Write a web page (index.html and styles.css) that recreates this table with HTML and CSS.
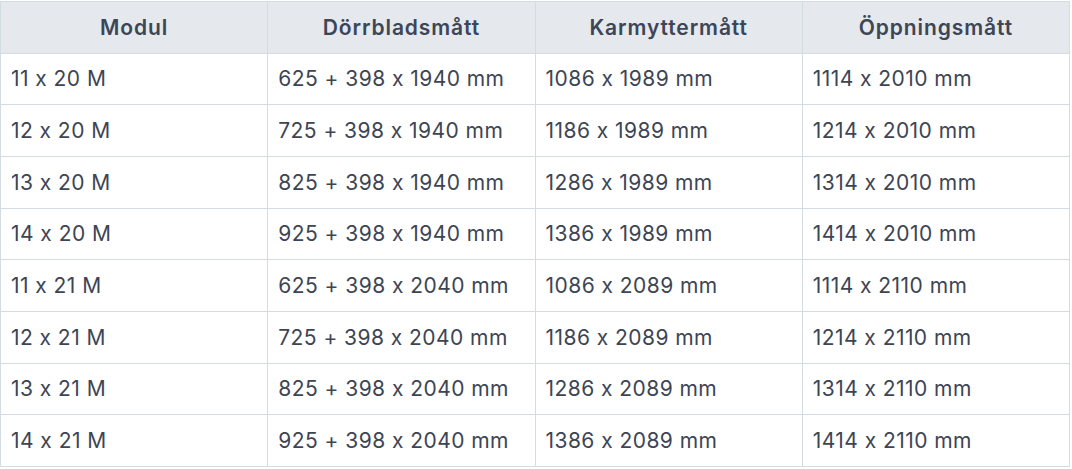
FILE: index.html
```html
<!DOCTYPE html>
<html lang="sv">
<head>
<meta charset="utf-8">
<title>Mått</title>
<link rel="stylesheet" href="styles.css">
</head>
<body>
<table class="dims">
  <thead>
    <tr><th>Modul</th><th>Dörrbladsmått</th><th>Karmyttermått</th><th>Öppningsmått</th></tr>
  </thead>
  <tbody>
    <tr><td>11 x 20 M</td><td>625 + 398 x 1940 mm</td><td>1086 x 1989 mm</td><td>1114 x 2010 mm</td></tr>
    <tr><td>12 x 20 M</td><td>725 + 398 x 1940 mm</td><td>1186 x 1989 mm</td><td>1214 x 2010 mm</td></tr>
    <tr><td>13 x 20 M</td><td>825 + 398 x 1940 mm</td><td>1286 x 1989 mm</td><td>1314 x 2010 mm</td></tr>
    <tr><td>14 x 20 M</td><td>925 + 398 x 1940 mm</td><td>1386 x 1989 mm</td><td>1414 x 2010 mm</td></tr>
    <tr><td>11 x 21 M</td><td>625 + 398 x 2040 mm</td><td>1086 x 2089 mm</td><td>1114 x 2110 mm</td></tr>
    <tr><td>12 x 21 M</td><td>725 + 398 x 2040 mm</td><td>1186 x 2089 mm</td><td>1214 x 2110 mm</td></tr>
    <tr><td>13 x 21 M</td><td>825 + 398 x 2040 mm</td><td>1286 x 2089 mm</td><td>1314 x 2110 mm</td></tr>
    <tr><td>14 x 21 M</td><td>925 + 398 x 2040 mm</td><td>1386 x 2089 mm</td><td>1414 x 2110 mm</td></tr>
  </tbody>
</table>
</body>
</html>
```
FILE: styles.css
```css
html, body {
  margin: 0;
  padding: 0;
  background: #ffffff;
}
body {
  padding: 1px 0 0 0;
  font-family: Inter, "Liberation Sans", sans-serif;
  font-feature-settings: "calt" 0;
}
.dims {
  border-collapse: collapse;
  table-layout: fixed;
  width: 1070px;
  font-size: 21px;
  letter-spacing: 0.45px;
  color: #3d4554;
}
.dims th, .dims td {
  border: 1.5px solid #d3dbe3;
  padding: 0 10px;
  height: 50.7px;
}
.dims th {
  background: #e5e8ec;
  color: #3c4657;
  font-weight: 600;
  letter-spacing: 0.9px;
  text-align: center;
  height: 50.5px;
}
.dims td {
  text-align: left;
  font-weight: 400;
}
```
